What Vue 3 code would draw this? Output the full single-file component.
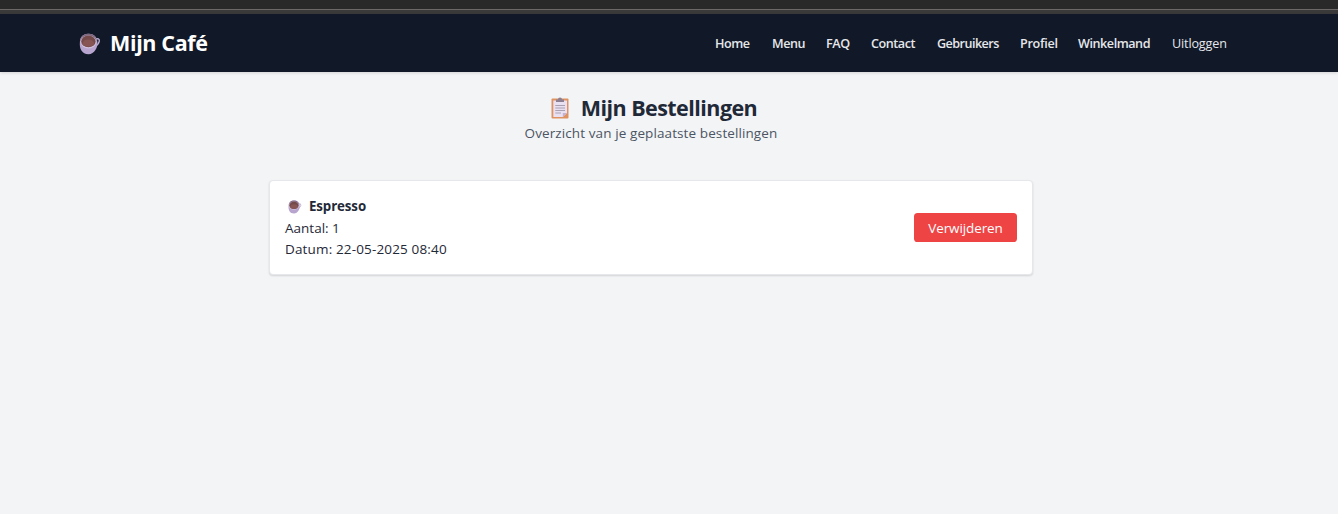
<script setup>
const links = ['Home', 'Menu', 'FAQ', 'Contact', 'Gebruikers', 'Profiel', 'Winkelmand']
</script>

<template>
  <div class="page">
    <svg width="0" height="0" class="defs" aria-hidden="true">
      <symbol id="cup" viewBox="0 0 22 22">
        <path d="M16 6.4 Q20.6 4.6 20.3 8.2 Q19.4 12 16 13.6" fill="none" stroke="#bcaed0" stroke-width="1.4" />
        <path d="M.9 9 C1 3.5 4.5 .8 9.5 .8 C14.8 .8 18.4 4 18.4 9.5 C19 14 15.5 21.2 9.5 21.2 C2.8 21.2 .2 15.5 .9 9Z" fill="#b8a5cf" />
        <path d="M1.4 8 C2 3 5 .8 9.5 .8 C14 .8 17 3.4 17.6 7.5Z" fill="#7d677f" />
        <ellipse cx="9.4" cy="8.9" rx="8" ry="6.5" fill="#d0c2dc" />
        <ellipse cx="9.4" cy="8.4" rx="7.2" ry="5.9" fill="#754a4b" />
        <ellipse cx="9.4" cy="10.2" rx="5.8" ry="3.6" fill="#865554" />
      </symbol>
    </svg>
    <div class="chrome"></div>
    <header class="bar">
      <div class="brand">
        <svg class="brand-cup"><use href="#cup" /></svg>
        <span>Mijn Café</span>
      </div>
      <nav>
        <a v-for="link in links" :key="link" :class="link.toLowerCase()">{{ link }}</a>
        <a class="uitloggen">Uitloggen</a>
      </nav>
    </header>
    <main>
      <div class="heading">
        <h1>
          <svg class="board" viewBox="0 0 18 22">
            <rect x=".5" y="1.5" width="17" height="20" rx="1" fill="#df925f" />
            <path d="M2.3 3.5H16V16L11.8 20H2.3Z" fill="#e9e0f2" />
            <path d="M11.8 20V16H16Z" fill="#c5b2d2" />
            <path d="M5 5V2.5H7Q7 .5 9 .5Q11 .5 11 2.5H13V5Z" fill="#8c7f91" />
            <path d="M4.3 8.5H14M4.3 11H14M4.3 13.5H14M4.3 16H10" stroke="#a39aac" stroke-width=".9" />
          </svg>
          <span>Mijn Bestellingen</span>
        </h1>
        <p>Overzicht van je geplaatste bestellingen</p>
      </div>
      <section class="card">
        <div class="order">
          <h2><svg class="small-cup"><use href="#cup" /></svg><span>Espresso</span></h2>
          <p class="amount">Aantal: 1</p>
          <p class="date">Datum: 22-05-2025 08:40</p>
        </div>
        <button>Verwijderen</button>
      </section>
    </main>
  </div>
</template>

<style>
body { margin: 0; background: #f3f4f6; }
</style>

<style scoped>
.page { height: 514px; overflow: hidden; background: #f3f4f6; color: #1f2937; font-family: "Open Sans", "Noto Sans", sans-serif; white-space: nowrap; }
.defs { position: absolute; }
.chrome { height: 14px; background: linear-gradient(#292929 0 9px, #6b6867 9px 10px, #3a3a3a 10px 14px); }
.bar { height: 58px; background: #111827; box-shadow: 0 1px 3px #0002; display: flex; justify-content: space-between; padding: 0 110px 0 79px; box-sizing: border-box; color: #fff; }
.brand { display: flex; align-items: center; font-size: 21.5px; font-weight: 700; gap: 9px; letter-spacing: -.35px; padding-bottom: 2px; }
.brand-cup { width: 22px; height: 22px; margin-top: 3px; }
nav { display: flex; align-items: center; font-size: 12.6px; font-weight: 600; color: #e5e7eb; letter-spacing: -.45px; }
.home { width: 57px; }
.menu { width: 54px; }
.faq { width: 45px; }
.contact { width: 66px; }
.gebruikers { width: 83px; letter-spacing: -.55px; }
.profiel { width: 58px; letter-spacing: -.3px; }
.winkelmand { width: 94px; }
.uitloggen { width: 56px; font-weight: 400; letter-spacing: -.15px; }
.heading { padding-top: 21px; display: flex; flex-direction: column; align-items: center; width: 1302px; }
h1, h2, p { margin: 0; }
h1 { display: flex; align-items: center; height: 29px; padding-left: 6px; font-size: 21.5px; line-height: 29px; gap: 12px; letter-spacing: -.55px; }
.board { width: 18px; height: 22px; }
.heading p { margin-top: 1px; font-size: 13.5px; line-height: 20px; letter-spacing: .1px; color: #4b5563; }
.card { margin: 37px 0 0 269px; width: 764px; height: 95px; box-sizing: border-box; border: 1px solid #e5e7eb; border-radius: 4px; background: #fff; box-shadow: 0 1px 2px #0002; padding: 0 15px; display: flex; justify-content: space-between; align-items: center; }
.order { padding-top: 2px; font-size: 13.5px; line-height: 21.6px; }
.date { letter-spacing: .15px; }
h2 { display: flex; align-items: center; font-size: 13.3px; line-height: 21.6px; letter-spacing: -.1px; }
.small-cup { width: 14px; height: 14px; margin: 0 7px 0 3px; }
button { width: 103px; height: 29px; border: 0; padding: 0; border-radius: 3.6px; background: #ef4444; color: #fff; font: 13.5px "Open Sans", sans-serif; letter-spacing: -.12px; }
</style>
